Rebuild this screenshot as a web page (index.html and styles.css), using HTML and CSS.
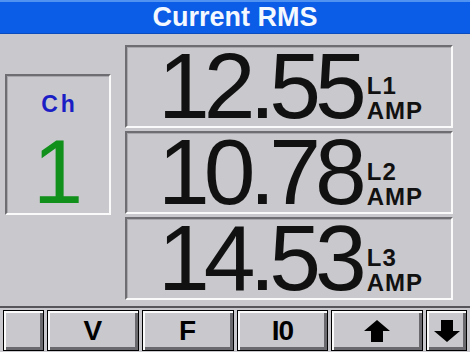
FILE: index.html
```html
<!DOCTYPE html>
<html lang="en">
<head>
    <meta charset="UTF-8">
    <title>Current RMS</title>
    <link rel="stylesheet" href="styles.css">
</head>
<body>
    <div class="screen">
        <div class="title">Current RMS</div>

        <div class="main">
            <div class="channel">
                <div class="ch-label">Ch</div>
                <div class="ch-num">1</div>
            </div>

            <div class="values">
                <div class="reading">
                    <span class="digits">12.55</span>
                    <span class="unit"><span>L1</span><span>AMP</span></span>
                </div>
                <div class="reading">
                    <span class="digits">10.78</span>
                    <span class="unit"><span>L2</span><span>AMP</span></span>
                </div>
                <div class="reading">
                    <span class="digits">14.53</span>
                    <span class="unit"><span>L3</span><span>AMP</span></span>
                </div>
            </div>
        </div>

        <div class="toolbar">
            <div class="btn small"></div>
            <div class="btn">V</div>
            <div class="btn">F</div>
            <div class="btn tight">I0</div>
            <div class="btn">
                <svg width="26" height="22" viewBox="0 0 26 22"><path d="M13 0 L26 11 L19 11 L19 22 L7 22 L7 11 L0 11 Z" fill="#000"/></svg>
            </div>
            <div class="btn small">
                <svg width="26" height="22" viewBox="0 0 26 22"><path d="M13 22 L26 11 L19 11 L19 0 L7 0 L7 11 L0 11 Z" fill="#000"/></svg>
            </div>
        </div>
    </div>
</body>
</html>
```

FILE: styles.css
```css
* {
    margin: 0;
    padding: 0;
    box-sizing: border-box;
}

body {
    width: 470px;
    height: 352px;
    overflow: hidden;
    background-color: #c9c8cc;
    font-family: 'Liberation Sans', Arial, sans-serif;
}

.screen {
    width: 470px;
    height: 352px;
    display: flex;
    flex-direction: column;
}

/* Title bar */
.title {
    height: 34px;
    background-color: #0b5ce6;
    border-top: 2px solid #4f92f2;
    border-bottom: 1px solid #0a4bbd;
    color: #f4f8ff;
    font-size: 27px;
    font-weight: bold;
    line-height: 30px;
    text-align: center;
}

.main {
    height: 272px;
    display: flex;
    gap: 14px;
    padding: 11px 0 0 5px;
}

/* Channel panel */
.channel {
    width: 106px;
    height: 141px;
    margin-top: 29px;
    border-top: 2px solid #6e6e72;
    border-left: 2px solid #6e6e72;
    border-right: 2px solid #fafafa;
    border-bottom: 2px solid #fafafa;
    box-shadow: inset 1px 1px 0 #a8a8ac;
    display: flex;
    flex-direction: column;
    align-items: center;
}

.ch-label {
    margin-top: 16px;
    color: #1a1ec4;
    font-size: 23px;
    font-weight: bold;
    letter-spacing: 3px;
    padding-left: 3px;
    line-height: 24px;
}

.ch-num {
    color: #11901c;
    font-size: 90px;
    line-height: 90px;
    margin-top: 11px;
}

/* Readings */
.values {
    width: 328px;
    display: flex;
    flex-direction: column;
    gap: 3px;
}

.reading {
    height: 83px;
    border-top: 2px solid #6e6e72;
    border-left: 2px solid #6e6e72;
    border-right: 2px solid #fafafa;
    border-bottom: 2px solid #fafafa;
    box-shadow: inset 1px 1px 0 #a8a8ac;
    display: flex;
    align-items: flex-end;
    padding: 0 0 0 31px;
}

.digits {
    font-size: 93px;
    line-height: 80px;
    letter-spacing: -6px;
    color: #111;
}

.unit {
    display: flex;
    flex-direction: column;
    margin-left: 6px;
    font-size: 24px;
    font-weight: bold;
    letter-spacing: 1px;
    line-height: 25px;
    color: #111;
    padding-bottom: 3px;
}

/* Bottom buttons */
.toolbar {
    flex: 1;
    border-top: 2px solid #55555a;
    display: flex;
    gap: 3px;
    padding: 2px 3px 0 3px;
}

.btn {
    width: 92px;
    height: 41px;
    background-color: #c9c8cc;
    border: 1px solid #000;
    box-shadow: inset 2px 2px 0 #fbfbfb, inset -3px -3px 0 #6a6a6e;
    display: flex;
    justify-content: center;
    align-items: center;
    font-size: 28px;
    font-weight: bold;
    color: #000;
}

.btn.small {
    width: 41px;
}

.tight {
    letter-spacing: -1px;
}
```
